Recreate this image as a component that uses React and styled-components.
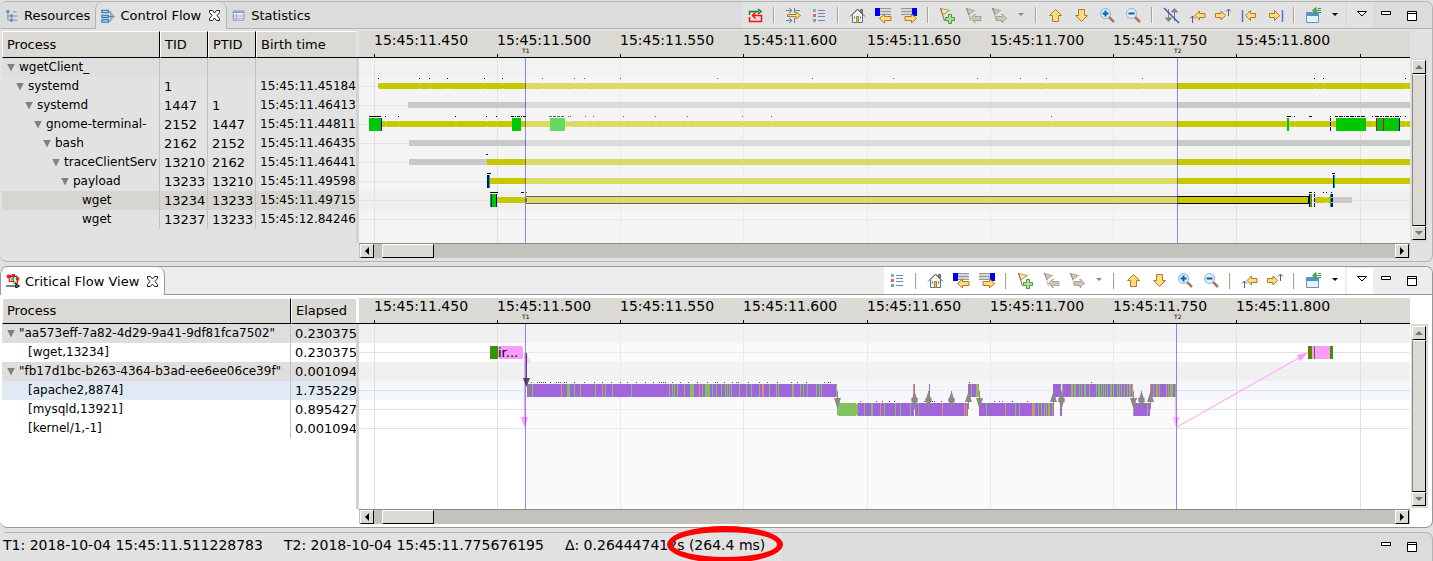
import React from "react";
import styled, { createGlobalStyle } from "styled-components";

const GlobalStyle = createGlobalStyle`
  * { box-sizing: border-box; }
  body {
    margin: 0;
    background: #e2e2e2;
    color: #000;
    font: 13px/19px "DejaVu Sans", sans-serif;
  }
  button { font: inherit; color: inherit; padding: 0; margin: 0; border: 0; background: none; }
`;

const Workbench = styled.div`
  display: flex;
  flex-direction: column;
  gap: 4px;
  min-height: 100vh;
  padding-top: 1px;
  overflow: hidden;
`;

const Panel = styled.section`
  border: 1px solid ${(p) => p.$line};
  border-left: 0;
  border-radius: 7px;
  background: ${(p) => p.$body};
  overflow: hidden;
`;

const TabBar = styled.header`
  display: flex;
  height: ${(p) => p.$h}px;
  margin-bottom: ${(p) => p.$gap}px;
  background: linear-gradient(${(p) => p.$line}, ${(p) => p.$line}) bottom / 100% 1px no-repeat ${(p) => p.$bar};
`;

const Tabs = styled.div`
  display: flex;
  flex: 1;
  white-space: nowrap;
`;

const Tab = styled.button`
  display: flex;
  align-items: center;
  gap: 5px;
  height: 100%;
  padding: 0 5px;
  font-size: 13px;
  ${(p) => p.$active && `
    background: ${p.$body};
    border: solid ${p.$line};
    border-width: 0 1px;
    border-radius: 8px 8px 0 0;
  `}
`;

const CloseMark = styled.span`
  display: flex;
  margin-left: 2px;
`;

const Toolbar = styled.div`
  display: flex;
  align-items: center;
  background: ${(p) => p.$bg};
  margin: 0 2px 1px 0;
  padding-right: 1px;
`;

const ToolButton = styled.button`
  display: flex;
  align-items: center;
  justify-content: center;
  width: ${(p) => (p.$narrow ? 18 : 26)}px;
  height: 26px;
  background: ${(p) => p.$bg || "transparent"};
`;

const Separator = styled.span`
  width: 2px;
  height: 16px;
  margin: 0 5px;
  border-left: 1px solid #a8a49c;
  border-right: 1px solid #f6f6f4;
`;

const WindowButtons = styled.div`
  display: flex;
  align-items: center;
  padding-right: 7px;
  margin-bottom: 1px;
`;

const Body = styled.div`
  display: flex;
  padding: 0 0 3px 2px;
`;

const TreePane = styled.div`
  flex: none;
  width: 354px;
  overflow: hidden;
`;

const TreeTable = styled.table`
  table-layout: fixed;
  width: 354px;
  border-collapse: separate;
  border-spacing: 0;
  white-space: nowrap;
  th {
    height: ${(p) => p.$head}px;
    padding: 0 0 0 4px;
    overflow: hidden;
    text-align: left;
    font-weight: normal;
    line-height: 24px;
    background: #dad9d4;
    border: 1px solid #000;
    border-top-color: #fff;
    border-left-color: #fff;
  }
  th:last-child { border-right: 0; }
`;

const Row = styled.tr`
  background: ${(p) => p.$bg || "transparent"};
  td {
    height: 19px;
    padding: 0 0 0 4px;
    overflow: hidden;
    border-right: 1px solid #c0c0c0;
  }
  td:first-child, td:nth-child(4) { font-size: 12px; }
  td:last-child { border-right: 0; }
`;

const TreeLabel = styled.div`
  display: flex;
  align-items: center;
  gap: 4px;
  padding-left: ${(p) => p.$level * 9 + (p.$leaf ? 13 : 1)}px;
`;

const Twisty = styled.button`
  flex: none;
  width: 8px;
  height: 8px;
  background: #808080;
  clip-path: polygon(0 0, 100% 0, 50% 100%);
`;

const Sash = styled.div`
  flex: none;
  width: 3px;
  margin: ${(p) => p.$head}px 0 15px;
  background: #d3d3d3;
  box-shadow: 0 -1px 0 #000;
`;

const ChartColumn = styled.div`
  flex: 1;
  min-width: 0;
`;

const Chart = styled.svg`
  display: block;
  width: 100%;
  height: ${(p) => p.$h}px;
  overflow: hidden;
`;

const HScroll = styled.div`
  display: flex;
  height: 15px;
  padding: 0 1px;
  background: #c3c2bb;
  border-top: 1px solid #8a8984;
`;

const ScrollButton = styled.button`
  display: flex;
  flex: none;
  align-items: center;
  justify-content: center;
  width: 14px;
  height: 14px;
  background: #dad9d4;
  border: 1px solid;
  border-color: #fff #000 #000 #fff;
`;

const Thumb = styled.div`
  width: 52px;
  height: 14px;
  margin: 0 auto 0 8px;
  background: #dad9d4;
  border: 1px solid;
  border-color: #fff #000 #000 #fff;
`;

const VScroll = styled.div`
  display: flex;
  flex: none;
  flex-direction: column;
  width: 17px;
  margin: ${(p) => p.$head}px 4px 16px 1px;
  padding: 2px 2px 2px 1px;
  background: #dad9d4;
`;

const VThumb = styled.div`
  flex: 1;
  background: #dad9d4;
  border: 1px solid;
  border-color: #fff #000 #000 #8a8984;
`;

const StatusBar = styled.footer`
  display: flex;
  flex: 1;
  min-height: 29px;
  background: #dcdcdc;
  border: 1px solid #b4b4b4;
  border-width: 1px 1px 0 0;
  border-radius: 7px 7px 0 0;
`;

const StatusText = styled.div`
  display: flex;
  gap: 21px;
  padding: 3px 17px 0 3px;
  font-size: 14px;
  white-space: nowrap;
  background: #e2e2e2;
`;

const StatusButtons = styled(WindowButtons)`
  margin-left: auto;
`;

const Circled = styled.span`
  position: relative;
`;

const Ring = styled.span`
  position: absolute;
  inset: -11px -18px -10px -10px;
  border: 6px solid #f00;
  border-radius: 50%;
`;

const gold = { fill: "#ffdc80", stroke: "#b07c20", strokeLinejoin: "round" };
const dim = { fill: "#cdc6b2", stroke: "#7c7460", strokeDasharray: "1 1" };
const arrowLeft = "M1.500 9.500 6.500 4.500V7.500H11.500V11.500H6.500V14.500Z";

const ICONS = {
  tree: <g fill="none" stroke="#5a7ab0"><path d="M3.500 4V13.500H8M3.500 8.500H8M10 3.500h4M10 8.500h5M10 13.500h5" /><path d="M2 2h3v2H2zM7 7h2v3H7zM7 12h2v3H7z" fill="#8aa6d8" /></g>,
  flow: <g fill="#fff" stroke="#2878b0"><path d="M1 1.500h8v3H1zM1 7.500h8v3H1zM1 13h8v3H1z" fill="#9ed0e8" strokeWidth="1.300" /><path d="M9 3.500h3v11H9M9 9h7M13 6l3 3-3 3" fill="none" stroke="#526d88" /></g>,
  stats: <g><path d="M1.500 2.500h13v11h-13z" fill="#fff" stroke="#6878a0" /><path d="M2 3h12v2H2z" fill="#8098c8" /><path d="M2 7.500h12M2 9.500h12M2 11.500h12M5.500 5v8" stroke="#98a8c8" /></g>,
  critical: <g fill="none"><path d="M2 3h12M9 2v8" stroke="#2020e0" strokeWidth="1.500" /><path d="M4 3v6h6M9 11h5V6" stroke="#f01818" strokeWidth="1.500" /><path d="M1 1h5v4H1zM7 0h4v4H7zM12 4h4v4h-4z" fill="#f01818" /><path d="M6 5h4v3H6zM10 9h3v3h-3z" fill="#20e020" /><path d="M0 14.500h13M12 12l4 2.500-4 2.500z" stroke="#000" strokeWidth="1.300" /></g>,
  close: <path d="M1.500 1.500h3L6.500 4 8.500 1.500h3v2L9 6.500l2.500 3v2h-3l-2-2.500-2 2.500h-3v-2L4 6.500l-2.500-3z" fill="#fff" stroke="#222" />,
  swap: <g fill="none" strokeWidth="1.500"><path d="M2.500 8V4.500H12M11 2l3 2.500L11 7" stroke="#108020" /><path d="M2.500 10v4.500h12V8.500H5M8.500 5.500l-3 3 3 3" stroke="#f81010" /></g>,
  align: <g><path d="M1 3.500h6M4 1l3 2.500L4 6M15 3.500h-5M1 13.500h6M4 11l3 2.500L4 16M9.500 1v5M9.500 11v5" stroke="#6080a0" fill="none" /><path d="M2.500 7.500H11V5l4.500 3.500L11 12V9.500H2.500z" {...gold} /></g>,
  legend: <g><path d="M2 2h3v3H2z" fill="#90a8d0" /><path d="M2 7h3v3H2z" fill="#e06868" /><path d="M2 12h3v3H2z" fill="#70b080" /><path d="M7 3.500h7M7 6.500h7M7 9.500h7M7 13.500h7" stroke="#6888c0" /></g>,
  home: <g><path d="M11.500 2.500h2v4h-2z" fill="#d07060" stroke="#80604a" /><path d="M3.500 7.500v8h10v-8L8.500 2.500z" fill="#f6f2e4" stroke="#5078a0" /><path d="M1 9.500 8.500 2 16 9.500" fill="none" stroke="#506880" /><path d="M7.500 9.500h2v6h-2z" fill="#e8c858" stroke="#a08030" /><path d="M5 10.500h1M11 10.500h1" stroke="#3080d0" strokeWidth="2" /></g>,
  prevEvent: <g><path d="M0 2h16v6H0z" fill="#d6d6d6" /><path d="M0 1.500h16M5 4.500h11M5 7.500h11" stroke="#999" /><path d="M0 1h5v8H0z" fill="#0000f0" /><path d="M4.500 11.500l5-4.500v2.500h6.500v4H9.500V16z" {...gold} /></g>,
  nextEvent: <g><path d="M0 2h16v6H0z" fill="#d6d6d6" /><path d="M0 1.500h16M0 4.500h11M0 7.500h11" stroke="#999" /><path d="M11 1h5v8h-5z" fill="#0000f0" /><path d="M15.500 11.500 10.500 7v2.500H4v4h6.500V16z" {...gold} /></g>,
  flagAdd: <g><path d="M1.500 1.500 10.500 3.500 4 7.500z" fill="#ffeca8" stroke="#b89848" /><path d="M1.500 1l4 13" stroke="#907030" /><path d="M9.500 7.500h3v3h3v3h-3v3h-3v-3h-3v-3h3z" fill="#b0e090" stroke="#489848" /></g>,
  flagPrev: <g><path d="M1.500 1.500 9.500 3.500 4 7.500zM1.500 1l4 13" {...dim} /><path d="M5.500 11 10 7v2.500h6v4h-6v2.500z" {...dim} /></g>,
  flagNext: <g><path d="M1.500 1.500 9.500 3.500 4 7.500zM1.500 1l4 13" {...dim} /><path d="M15.500 11 11 7v2.500H5.500v4H11v2.500z" {...dim} /></g>,
  caretDim: <path d="M5 6h6L8 9z" fill="#888" />,
  caret: <path d="M5 6h6L8 9z" fill="#000" />,
  up: <path d="M8.500 2.500 14.500 8.500H11.500V14.500H5.500V8.500H2.500z" {...gold} />,
  down: <path d="M8.500 14.500 14.500 8.500H11.500V2.500H5.500V8.500H2.500z" {...gold} />,
  zoomIn: <g><path d="M10 10 15 15" stroke="#a87860" strokeWidth="2.500" /><circle cx="6.500" cy="6.500" r="5" fill="#d8f0fc" stroke="#88b4d0" /><path d="M6.500 3.500v6M3.500 6.500h6" stroke="#1060a8" strokeWidth="2" /></g>,
  zoomOut: <g><path d="M10 10 15 15" stroke="#a87860" strokeWidth="2.500" /><circle cx="6.500" cy="6.500" r="5" fill="#d8f0fc" stroke="#88b4d0" /><path d="M3.500 6.500h6" stroke="#1060a8" strokeWidth="2" /></g>,
  hideArrows: <g fill="#909090" stroke="#808080"><path d="M5.500 2v12M2.500 11l3 3.500 3-3.500zM11.500 14V2M8.500 5l3-3.500 3 3.500z" /><path d="M1 1l15 15" stroke="#3860b8" strokeWidth="1.500" /></g>,
  prevLink: <g><path d="M6 8.500 10.500 4V6.500h5.500v4H10.500v2.500z" {...gold} /><path d="M3.500 16V9M1 11.500l2.500-2.500L6 11.500" fill="none" stroke="#606060" /></g>,
  nextLink: <g><path d="M10.500 8.500 6 4V6.500H.5v4H6v2.500z" {...gold} /><path d="M13.500 9V2M11 4.500 13.500 2 16 4.500" fill="none" stroke="#606060" /></g>,
  first: <g><path d="M1.500 3v12" stroke="#4878c0" strokeWidth="1.500" /><path d={arrowLeft} transform="translate(3 -1)" {...gold} /></g>,
  last: <g><path d="M15.500 3v12" stroke="#4878c0" strokeWidth="1.500" /><path d={arrowLeft} transform="translate(14 -1) scale(-1 1)" {...gold} /></g>,
  newView: <g><path d="M1.500 5.500h12v10h-12z" fill="#e4f2fc" stroke="#7890a8" /><path d="M2 6h11v3H2z" fill="#4e94d0" /><path d="M7.500 3.500 11 .5v6zM11 3.500h5M13 1.500h3M13 5.500h3" fill="#58b860" stroke="#389840" /></g>,
  chevron: <path d="M5.500 4.500h9L10 9z" fill="#fff" stroke="#000" />,
  minimize: <path d="M3.500 4.500h9v3h-9z" fill="#fff" stroke="#000" />,
  maximize: <g fill="#fff" stroke="#000"><path d="M3.500 4.500h9v9h-9zM3 6.500h10" /></g>,
};

const Icon = ({ name, size = 16 }) => (
  <svg width={size} height={size} viewBox={name === "close" ? "0 0 13 13" : "0 0 17 17"} aria-hidden="true">{ICONS[name]}</svg>
);

const ToolItems = ({ items }) =>
  items.map((name, i) =>
    name === "|" ? <Separator key={i} /> : (
      <ToolButton key={i} aria-label={name} $narrow={name.startsWith("caret")}>
        <Icon name={name} size={17} />
      </ToolButton>
    )
  );

const WindowControls = ({ bg }) => (
  <WindowButtons>
    <ToolButton aria-label="View menu" $bg={bg}><Icon name="chevron" size={17} /></ToolButton>
    <ToolButton aria-label="Minimize"><Icon name="minimize" size={17} /></ToolButton>
    <ToolButton aria-label="Maximize"><Icon name="maximize" size={17} /></ToolButton>
  </WindowButtons>
);

const Tree = ({ head, columns, rows }) => (
  <TreePane>
    <TreeTable $head={head}>
      <colgroup>{columns.map(([n, w]) => <col key={n} style={{ width: w }} />)}</colgroup>
      <thead><tr>{columns.map(([n]) => <th key={n}>{n}</th>)}</tr></thead>
      <tbody>
        {rows.map(({ level, leaf, bg, cells }, i) => (
          <Row key={i} $bg={bg}>
            {cells.map((c, j) => (
              <td key={j}>
                {j ? c : (
                  <TreeLabel $level={level} $leaf={leaf}>
                    {!leaf && <Twisty aria-label="Collapse" />}
                    {c}
                  </TreeLabel>
                )}
              </td>
            ))}
          </Row>
        ))}
      </tbody>
    </TreeTable>
  </TreePane>
);

/* Chart drawings use x measured from the window's left edge; ORIGIN is the chart's left edge. */
const ORIGIN = 359;
const END = 5000;
const T1 = 525;
const T2 = 1177;
const TICKS = [374, 497, 620, 743, 867, 990, 1113, 1236, 1360];
const LABELS = ["450", "500", "550", "600", "650", "700", "750", "800"];

const Axis = ({ head }) => (
  <g>
    <rect x={ORIGIN} width={END} height={head - 1} fill="#dad9d4" />
    <rect x={ORIGIN} y={head - 1} width={END} height="1" />
    {TICKS.map((x) => <rect key={x} x={x} y={head - 4} width="1" height="3" />)}
    <g fontSize="14">
      {LABELS.map((l, i) => <text key={l} x={TICKS[i]} y={head - 13}>15:45:11.{l}</text>)}
    </g>
    <g fontSize="6">
      <text x={T1 - 3} y={head - 5}>T1</text>
      <text x={T2 - 3} y={head - 5}>T2</text>
    </g>
  </g>
);

const Grid = ({ head, rows, height }) => (
  <g fill="#e2e2e2">
    {TICKS.map((x) => <rect key={x} x={x} y={head} width="1" height={height} />)}
    {rows.map((i) => <rect key={i} x={ORIGIN} y={head + i * 19 + 9} width={END} height="1" />)}
  </g>
);

const Marker = ({ x, head }) => <rect x={x} y={head} width="1" height="400" fill="#0000ff" opacity=".45" />;

const Y = "#c8c800", S = "#c8c8c8", G = "#00c800", B = "#0000c8", P = "#c80064";
/* [row, start, end, colour]; waiting and sleeping states are drawn low, all others tall */
const STATES = [
  [1, 378, END, Y], [2, 408, END, S],
  [3, 382, END, Y], [3, 369, 381, G], [3, 381, 382, B], [3, 512, 521, G], [3, 550, 565, G],
  [3, 1287, 1289, G], [3, 1330, 1331, B], [3, 1336, 1366, G], [3, 1376, 1377, P], [3, 1377, 1383, G],
  [3, 1383, 1384, P], [3, 1384, 1399, G], [3, 1399, 1400, B],
  [4, 409, END, S], [5, 409, 487, S], [5, 487, END, Y],
  [6, 490, END, Y], [6, 487, 489, B], [6, 489, 490, G], [6, 1333, 1334, B], [6, 1334, 1335, G],
  [7, 497, 526, Y], [7, 490, 491, G], [7, 491, 492, B], [7, 492, 496, G], [7, 496, 497, B],
  [7, 1315, 1330, Y], [7, 1309, 1310, B], [7, 1310, 1311, G], [7, 1311, 1312, "#c86400"], [7, 1314, 1315, B],
  [7, 1330, 1331, G], [7, 1331, 1333, B], [7, 1333, 1352, S],
];
const DOTS = {
  1: [378, 419, 429, 447, 484, 502, 542, 574, 584, 620, 717, 812, 893, 977, 1020, 1046, 1142, 1314, 1323, 1405],
  3: [385, 398, 455, 486, 496, 568, 570, 585, 593, 623, 655, 687, 742, 771, 1051, 1290, 1294, 1330, 1372, 1405],
  7: [522, 526, 1314, 1323, 1326, 1331],
};
const DASHES = [[3, 369, 12, "12"], [3, 511, 16, "3 1 1 1"], [3, 549, 15, "3 1"], [3, 1287, 3, "3"], [3, 1309, 3, "3"],
  [3, 1335, 30, "3 1 4 1 1 1"], [3, 1375, 26, "4 1 2 1 1 1"], [5, 486, 2, "2"], [6, 487, 4, "4"], [6, 1332, 3, "3"], [7, 490, 8, "8"], [7, 1309, 3, "3"], [7, 521, 3, "3"]];

const ControlChart = () => {
  const head = 27;
  const top = (r) => head + r * 19;
  return (
    <Chart $h={212} role="img" aria-label="Control flow time chart">
      <g transform={`translate(-${ORIGIN} 0)`} shapeRendering="crispEdges">
        <rect x={ORIGIN} width={END} height="212" fill="#f4f4f4" />
        <rect x={ORIGIN} y={top(0)} width={END} height="19" fill="#f1f1f1" />
        <rect x={ORIGIN} y={top(7)} width={END} height="19" fill="#f0efed" />
        <Grid head={head} rows={[1, 2, 3, 4, 5, 6, 7, 8]} height={185} />
        {STATES.map(([r, a, b, c]) => {
          const low = c === Y || c === S;
          return <rect key={`${r}-${a}-${c}`} x={a} y={top(r) + (low ? 6 : 3)} width={b - a} height={low ? 6 : 13} rx={low ? 1 : 0} fill={c} />;
        })}
        <rect x="526.5" y={top(7) + 5.5} width="782" height="7" rx="1" fill={Y} stroke="#000" />
        {Object.entries(DOTS).map(([r, xs]) => xs.map((x) => (
          <g key={`${r}-${x}`}>
            <rect x={x} y={top(+r) + 1} width="1" height="1" />
            <path d={`M${x} ${top(+r) + 6.5}h2M${x} ${top(+r) + 11.5}h2`} stroke="#d8d860" />
          </g>
        )))}
        {DASHES.map(([r, x, w, d]) => <path key={`${r}-${x}`} d={`M${x} ${top(r) + 1.5}h${w}`} stroke="#000" strokeDasharray={d} />)}
        <rect x={T1 + 1} y={head} width={T2 - T1 - 1} height="185" fill="#f8f8f8" opacity=".4" />
        <Marker x={T1} head={head} />
        <Marker x={T2} head={head} />
        <Axis head={head} />
      </g>
    </Chart>
  );
};

const RUN = "#a064dc", CPU = "#82c062", DISK = "#dc9660", LINK = "#8c8882";
const RUNS = [
  [3, 530, 837], [4, 857, 914], [4, 915, 968], [4, 979, 1054], [4, 1060, 1062], [4, 1133, 1150],
  [3, 914, 915], [3, 929, 930], [3, 968, 979], [3, 1053, 1061], [3, 1062, 1133], [3, 1150, 1176],
];
const CPU_TICKS = {
  3: [532, 567, 568, 569, 574, 580, 595, 605, 612, 631, 669, 672, 674, 677, 684, 690, 691, 692, 693, 702, 705, 706, 707, 708, 709, 712, 716, 721, 725, 727, 729, 731, 739, 746, 751, 759, 769, 776, 778, 792, 793, 800, 803, 807, 816, 819, 821, 836, 971, 976, 977, 1062, 1071, 1074, 1075, 1079, 1081, 1084, 1085, 1089, 1096, 1098, 1099, 1101, 1103, 1105, 1107, 1110, 1111, 1113, 1117, 1119, 1121, 1124, 1129, 1130, 1153, 1157, 1159, 1166, 1168, 1171, 1172, 1175],
  4: [857, 864, 871, 872, 884, 895, 900, 910, 918, 986, 1015, 1019, 1034, 1038, 1041, 1044, 1046, 1048, 1052, 1133, 1147],
};
const DISK_TICKS = {
  3: [561, 602, 699, 762, 763, 913, 978, 1072, 1127, 1132, 1150, 1156, 1170],
  4: [880, 942, 964, 966, 1005, 1032, 1033, 1049],
};
const RUN_DOTS = {
  3: [531, 537, 539, 541, 543, 545, 550, 556, 558, 560, 564, 566, 574, 584, 594, 602, 611, 620, 627, 636, 645, 653, 659, 661, 663, 665, 672, 680, 688, 697, 707, 715, 717, 724, 732, 736, 738, 748, 759, 767, 777, 791, 797, 806, 824, 828, 830, 969, 1091],
  4: [860, 876, 882, 889, 894, 924, 932, 934, 941, 994, 999, 1002, 1012, 1027],
};
const DOWN_LINKS = [837, 979, 1133];
const UP_LINKS = [968, 1053, 1150];
const BOTH_LINKS = [914, 928, 951, 1061, 1141];

const CriticalChart = () => {
  const head = 26;
  const top = (r) => head + r * 19;
  const ticks = (data, fill) => Object.entries(data).map(([r, xs]) => xs.map((x) => (
    <rect key={`${r}-${x}`} x={x} y={top(+r) + 3} width="1" height="13" fill={fill} />
  )));
  return (
    <Chart $h={211} role="img" aria-label="Critical flow time chart">
      <g transform={`translate(-${ORIGIN} 0)`} shapeRendering="crispEdges">
        <rect x={ORIGIN} width={END} height="211" fill="#fff" />
        <rect x={ORIGIN} y={top(0)} width={END} height="19" fill="#f0f0f0" />
        <rect x={ORIGIN} y={top(2)} width={END} height="19" fill="#f0f0f0" />
        <rect x={ORIGIN} y={top(3)} width={END} height="19" fill="#f4f8fd" />
        <Grid head={head} rows={[1, 3, 4, 5]} height={185} />
        <rect x={T1 + 1} y={head} width={T2 - T1 - 1} height="185" fill="#f4f4f4" opacity=".45" />
        <rect x="490" y={top(1) + 3} width="8" height="13" rx="1" fill="#329600" />
        <rect x="498" y={top(1) + 3} width="25" height="13" rx="3" fill="#ff9aff" />
        <text x="498" y={top(1) + 14} fontSize="13">ir...</text>
        <rect x="527" y={top(3) + 3} width="3" height="13" fill={LINK} />
        {RUNS.map(([r, a, b]) => <rect key={a} x={a} y={top(r) + 3} width={b - a} height="13" fill={RUN} />)}
        <rect x="837" y={top(4) + 3} width="20" height="13" rx="3" fill={CPU} />
        {ticks(CPU_TICKS, CPU)}
        {ticks(DISK_TICKS, DISK)}
        {Object.entries(RUN_DOTS).map(([r, xs]) => xs.map((x) => (
          <rect key={`${r}-${x}`} x={x} y={top(+r) + 1} width="1" height="1" fill="#555" />
        )))}
        <g fill={LINK} shapeRendering="auto">
          {[...DOWN_LINKS, ...BOTH_LINKS].map((x) => <path key={x} d={`M${x} 93h1v7h3l-3.500 11-3.500-11h3z`} />)}
          {[...UP_LINKS, ...BOTH_LINKS].map((x) => <path key={x} d={`M${x} 111h1v-7h3l-3.500-11-3.500 11h3z`} />)}
        </g>
        <g fill="#ff9aff" stroke="none" shapeRendering="auto">
          <path d="M524 55h1v64h3l-3.500 11-3.500-11h3z" />
          <path d="M526.500 54l3.500 11h-7z" fill="#ffc4ff" />
          <path d="M1175 99h1v20h3.500l-3.500 11-3.500-11h2.500z" fill="#ffb4ff" />
          <path d="M1177 129 1304 57" stroke="#ff9aff" />
          <path d="M1308 54.500 1300 63.500 1297 57z" />
        </g>
        <path d="M526 55h1v25h3l-3.500 9-3.500-9h3z" fill="#55504c" shapeRendering="auto" />
        <rect x="1308" y={top(1) + 3} width="25" height="13" fill="#ff9aff" />
        <path d={`M1308 ${top(1) + 3}h3v13h-3zM1314 ${top(1) + 3}h1v13h-1zM1330 ${top(1) + 3}h3v13h-3z`} fill="#329600" />
        <rect x="1311" y={top(1) + 3} width="1" height="13" fill="#c85000" />
        <Marker x={T1} head={head} />
        <Marker x={T2 - 1} head={head} />
        <Axis head={head} />
      </g>
    </Chart>
  );
};

const Arrow = ({ d, dimmed }) => (
  <svg width="8" height="8" viewBox="0 0 8 8" aria-hidden="true"><path d={d} fill={dimmed ? "#777" : "#000"} /></svg>
);

const TimeGraph = ({ head, tree, children }) => (
  <Body>
    {tree}
    <Sash $head={head} />
    <ChartColumn>
      {children}
      <HScroll>
        <ScrollButton aria-label="Scroll left"><Arrow d="M6 0v8L2 4z" /></ScrollButton>
        <Thumb />
        <ScrollButton aria-label="Scroll right"><Arrow d="M2 0v8l4-4z" /></ScrollButton>
      </HScroll>
    </ChartColumn>
    <VScroll $head={head}>
      <ScrollButton aria-label="Scroll up"><Arrow dimmed d="M0 6h8L4 2z" /></ScrollButton>
      <VThumb />
      <ScrollButton aria-label="Scroll down"><Arrow dimmed d="M0 2h8L4 6z" /></ScrollButton>
    </VScroll>
  </Body>
);

const CONTROL_COLUMNS = [["Process", 158], ["TID", 48], ["PTID", 48], ["Birth time", 100]];
const CONTROL_ROWS = [
  { level: 0, bg: "#dedede", cells: ["wgetClient_", "", "", ""] },
  { level: 1, cells: ["systemd", "1", "", "15:45:11.45184"] },
  { level: 2, cells: ["systemd", "1447", "1", "15:45:11.46413"] },
  { level: 3, cells: ["gnome-terminal-", "2152", "1447", "15:45:11.44811"] },
  { level: 4, cells: ["bash", "2162", "2152", "15:45:11.46435"] },
  { level: 5, cells: ["traceClientServ", "13210", "2162", "15:45:11.46441"] },
  { level: 6, cells: ["payload", "13233", "13210", "15:45:11.49598"] },
  { level: 7, leaf: true, bg: "#d6d5d0", cells: ["wget", "13234", "13233", "15:45:11.49715"] },
  { level: 7, leaf: true, cells: ["wget", "13237", "13233", "15:45:12.84246"] },
];

const CRITICAL_COLUMNS = [["Process", 289], ["Elapsed", 65]];
const CRITICAL_ROWS = [
  { level: 0, bg: "#dedede", cells: ['"aa573eff-7a82-4d29-9a41-9df81fca7502"', "0.230375"] },
  { level: 1, leaf: true, cells: ["[wget,13234]", "0.230375"] },
  { level: 0, bg: "#dedede", cells: ['"fb17d1bc-b263-4364-b3ad-ee6ee06ce39f"', "0.001094"] },
  { level: 1, leaf: true, bg: "#e1e9f5", cells: ["[apache2,8874]", "1.735229"] },
  { level: 1, leaf: true, cells: ["[mysqld,13921]", "0.895427"] },
  { level: 1, leaf: true, cells: ["[kernel/1,-1]", "0.001094"] },
];

const NAV = ["home", "prevEvent", "nextEvent", "|", "flagAdd", "flagPrev", "flagNext", "caretDim", "|", "up", "down", "zoomIn", "zoomOut", "|"];
const CONTROL_TOOLS = ["swap", "|", "align", "legend", "|", ...NAV, "hideArrows", "prevLink", "nextLink", "first", "last", "|", "newView", "caret"];
const CRITICAL_TOOLS = ["legend", "|", ...NAV, "prevLink", "nextLink", "|", "newView", "caret"];

export default function App() {
  return (
    <Workbench>
      <GlobalStyle />
      <Panel $line="#b4b4b4" $body="#e2e2e2">
        <TabBar $bar="#dcdcdc" $line="#b4b4b4" $h={27} $gap={2}>
          <Tabs role="tablist">
            <Tab role="tab"><Icon name="tree" size={14} />Resources</Tab>
            <Tab role="tab" $active $body="#e2e2e2" $line="#b4b4b4">
              <Icon name="flow" size={14} />Control Flow<CloseMark><Icon name="close" size={13} /></CloseMark>
            </Tab>
            <Tab role="tab"><Icon name="stats" size={14} />Statistics</Tab>
          </Tabs>
          <Toolbar $bg="#e2e2e2"><ToolItems items={CONTROL_TOOLS} /></Toolbar>
          <WindowControls bg="#e2e2e2" />
        </TabBar>
        <TimeGraph head={27} tree={<Tree head={27} columns={CONTROL_COLUMNS} rows={CONTROL_ROWS} />}>
          <ControlChart />
        </TimeGraph>
      </Panel>
      <Panel $line="#989898" $body="#fff">
        <TabBar $bar="#ededed" $line="#989898" $h={28} $gap={3}>
          <Tabs role="tablist">
            <Tab role="tab" $active $body="#fff" $line="#989898">
              <Icon name="critical" size={14} />Critical Flow View<CloseMark><Icon name="close" size={13} /></CloseMark>
            </Tab>
          </Tabs>
          <Toolbar $bg="#fff"><ToolItems items={CRITICAL_TOOLS} /></Toolbar>
          <WindowControls bg="#fff" />
        </TabBar>
        <TimeGraph head={26} tree={<Tree head={26} columns={CRITICAL_COLUMNS} rows={CRITICAL_ROWS} />}>
          <CriticalChart />
        </TimeGraph>
      </Panel>
      <StatusBar>
        <StatusText>
          <span>T1: 2018-10-04 15:45:11.511228783</span>
          <span>T2: 2018-10-04 15:45:11.775676195</span>
          <span>Δ: 0.264447412<Circled>s (264.4 ms)<Ring /></Circled></span>
        </StatusText>
        <StatusButtons>
          <ToolButton aria-label="Minimize"><Icon name="minimize" size={17} /></ToolButton>
          <ToolButton aria-label="Maximize"><Icon name="maximize" size={17} /></ToolButton>
        </StatusButtons>
      </StatusBar>
    </Workbench>
  );
}
